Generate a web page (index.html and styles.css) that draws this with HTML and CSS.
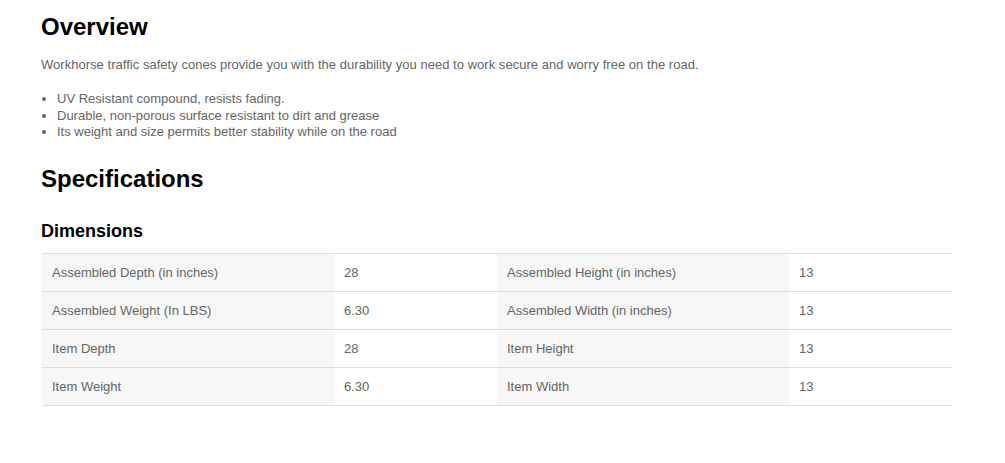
FILE: index.html
```html
<!DOCTYPE html>
<html>
<head>
<meta charset="utf-8">
<link rel="stylesheet" href="styles.css">
</head>
<body>
<div class="page">
  <h1 class="title">Overview</h1>
  <p class="intro">Workhorse traffic safety cones provide you with the durability you need to work secure and worry free on the road.</p>
  <ul class="features">
    <li>UV Resistant compound, resists fading.</li>
    <li>Durable, non-porous surface resistant to dirt and grease</li>
    <li>Its weight and size permits better stability while on the road</li>
  </ul>
  <h1 class="title specs-title">Specifications</h1>
  <h2 class="subtitle">Dimensions</h2>
  <table class="specs">
    <colgroup>
      <col class="c-label">
      <col class="c-value">
      <col class="c-label">
      <col class="c-value">
    </colgroup>
    <tr>
      <td class="label">Assembled Depth (in inches)</td><td class="value">28</td>
      <td class="label">Assembled Height (in inches)</td><td class="value">13</td>
    </tr>
    <tr>
      <td class="label">Assembled Weight (In LBS)</td><td class="value">6.30</td>
      <td class="label">Assembled Width (in inches)</td><td class="value">13</td>
    </tr>
    <tr>
      <td class="label">Item Depth</td><td class="value">28</td>
      <td class="label">Item Height</td><td class="value">13</td>
    </tr>
    <tr>
      <td class="label">Item Weight</td><td class="value">6.30</td>
      <td class="label">Item Width</td><td class="value">13</td>
    </tr>
  </table>
</div>
</body>
</html>
```

FILE: styles.css
```css
html, body {
  margin: 0;
  padding: 0;
  background: #fff;
}
body {
  font-family: "Liberation Sans", Arial, sans-serif;
  color: #666;
}
.page {
  width: 911px;
  padding: 13px 0 40px 41px;
}
.title {
  font-size: 24px;
  line-height: 28px;
  font-weight: bold;
  color: #000;
  margin: 0;
}
.intro {
  font-size: 13px;
  line-height: 17px;
  margin: 15px 0 0;
  letter-spacing: 0.03px;
}
.features {
  font-size: 13px;
  line-height: 16.7px;
  margin: 18px 0 0;
  padding-left: 16px;
}
.specs-title {
  margin-top: 24px;
}
.subtitle {
  font-size: 18px;
  line-height: 21px;
  font-weight: bold;
  color: #000;
  margin: 28px 0 0;
}
.specs {
  margin: 11px 0 0 1px;
  width: 910px;
  border-collapse: collapse;
  table-layout: fixed;
  border-top: 1px solid #ddd;
  font-size: 13px;
  line-height: 17px;
}
.c-label { width: 292px; }
.c-value { width: 163px; }
.specs td {
  padding: 10px 10px;
  border-bottom: 1px solid #ddd;
  color: #666;
  text-align: left;
  vertical-align: top;
}
.specs td.label {
  background: #f7f7f7;
}
.specs td.value {
  background: #fff;
}
```
